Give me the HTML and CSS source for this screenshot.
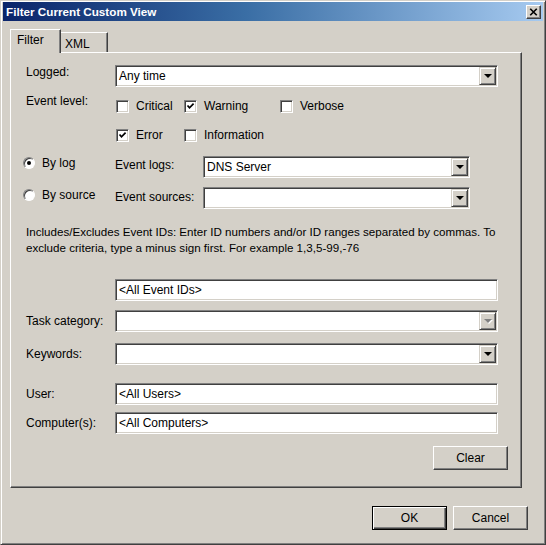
FILE: index.html
```html
<!DOCTYPE html>
<html lang="en">
<head>
  <meta charset="UTF-8">
  <meta name="viewport" content="width=device-width, initial-scale=1.0">
  <title>Filter Current Custom View</title>
  <link rel="stylesheet" href="styles.css">
</head>
<body>
  <div class="window">
    <div class="titlebar">
      <span class="title">Filter Current Custom View</span>
      <button class="close-btn">
        <svg width="14" height="12" viewBox="0 0 14 12"><path d="M3.5 2.5 L10.5 9.5 M10.5 2.5 L3.5 9.5" stroke="#000" stroke-width="1.8" fill="none"/></svg>
      </button>
    </div>

    <div class="content">
      <div class="tabs">
        <div class="tab active">Filter</div>
        <div class="tab">XML</div>
      </div>

      <div class="panel">
        <div class="row row-logged">
          <span class="label">Logged:</span>
          <div class="field wide"><span class="value">Any time</span><span class="drop"></span></div>
        </div>

        <div class="row row-level">
          <span class="label">Event level:</span>
          <div class="checks">
            <label class="check"><span class="box"></span>Critical</label>
            <label class="check"><span class="box checked"><svg width="11" height="11" viewBox="0 0 11 11"><path d="M2.5 4.5 L4.5 6.8 L8.6 2.6" stroke="#000" stroke-width="1.7" fill="none"/></svg></span>Warning</label>
            <label class="check"><span class="box"></span>Verbose</label>
            <label class="check"><span class="box checked"><svg width="11" height="11" viewBox="0 0 11 11"><path d="M2.5 4.5 L4.5 6.8 L8.6 2.6" stroke="#000" stroke-width="1.7" fill="none"/></svg></span>Error</label>
            <label class="check"><span class="box"></span>Information</label>
          </div>
        </div>

        <div class="row row-log">
          <label class="radio-label"><span class="radio on"></span>By log</label>
          <span class="sub-label">Event logs:</span>
          <div class="field narrow"><span class="value">DNS Server</span><span class="drop"></span></div>
        </div>

        <div class="row row-source">
          <label class="radio-label"><span class="radio"></span>By source</label>
          <span class="sub-label">Event sources:</span>
          <div class="field narrow"><span class="value"></span><span class="drop"></span></div>
        </div>

        <p class="hint">Includes/Excludes Event IDs: Enter ID numbers and/or ID ranges separated by commas. To<br>exclude criteria, type a minus sign first. For example 1,3,5-99,-76</p>

        <div class="row row-ids">
          <div class="field wide"><span class="value">&lt;All Event IDs&gt;</span></div>
        </div>

        <div class="row row-task">
          <span class="label">Task category:</span>
          <div class="field wide"><span class="value"></span><span class="drop disabled"></span></div>
        </div>

        <div class="row row-keywords">
          <span class="label">Keywords:</span>
          <div class="field wide"><span class="value"></span><span class="drop"></span></div>
        </div>

        <div class="row row-user">
          <span class="label">User:</span>
          <div class="field wide"><span class="value">&lt;All Users&gt;</span></div>
        </div>

        <div class="row row-computer">
          <span class="label">Computer(s):</span>
          <div class="field wide"><span class="value">&lt;All Computers&gt;</span></div>
        </div>

        <button class="btn clear-btn">Clear</button>
      </div>

      <div class="footer">
        <button class="btn default">OK</button>
        <button class="btn">Cancel</button>
      </div>
    </div>
  </div>
</body>
</html>
```

FILE: styles.css
```css
* {
  box-sizing: border-box;
}

body {
  margin: 0;
  font-family: "Liberation Sans", Arial, sans-serif;
  font-size: 12px;
  color: #000;
  background-color: #d4d0c8;
}

.window {
  width: 546px;
  height: 545px;
  padding: 1px 2px;
  background-color: #d4d0c8;
  border: 1px solid;
  border-color: #d4d0c8 #404040 #404040 #d4d0c8;
  box-shadow: inset 1px 1px #fff, inset -1px -1px #808080;
}

.titlebar {
  height: 19px;
  display: flex;
  align-items: center;
  justify-content: space-between;
  padding: 0 2px 0 3px;
  background: linear-gradient(to right, #0a246a, #3a6ea5 45%, #a6caf0);
}

.title {
  color: #fff;
  font-weight: bold;
  font-size: 11.7px;
}

.close-btn {
  width: 15px;
  height: 14px;
  padding: 0;
  display: flex;
  align-items: center;
  justify-content: center;
  background-color: #d4d0c8;
  border: 1px solid;
  border-color: #fff #404040 #404040 #fff;
  box-shadow: inset -1px -1px #808080;
}

.content {
  padding-left: 7px;
}

.tabs {
  display: flex;
  align-items: flex-end;
  margin-top: 7px;
  height: 24px;
}

.tab {
  height: 20px;
  padding: 3px 0 0 4px;
  width: 47px;
  line-height: 16px;
  background-color: #d4d0c8;
  border-top: 1px solid #fff;
  border-right: 1px solid #404040;
  box-shadow: inset -1px 0 #808080;
}

.tab.active {
  position: relative;
  z-index: 1;
  height: 24px;
  width: 51px;
  margin-bottom: -1px;
  padding: 2px 0 0 6px;
  border-left: 1px solid #fff;
}

.panel {
  width: 512px;
  display: flex;
  flex-direction: column;
  padding: 12px 23px 17px 15px;
  background-color: #d4d0c8;
  border: 1px solid;
  border-color: #fff #404040 #404040 #fff;
  box-shadow: inset -1px -1px #808080;
}

.row {
  display: flex;
  align-items: center;
}

.label {
  width: 89px;
  line-height: 16px;
  flex-shrink: 0;
}

.row-logged {
  align-items: flex-start;
}

.row-logged .label {
  margin-top: -1px;
}

.field {
  height: 22px;
  display: flex;
  align-items: center;
  padding: 0 1px 0 3px;
  background-color: #fff;
  border: 1px solid;
  border-color: #808080 #fff #fff #808080;
  box-shadow: inset 1px 1px #404040, inset -1px -1px #d4d0c8;
}

.field.wide {
  width: 383px;
}

.field.narrow {
  width: 267px;
}

.value {
  flex: 1;
  white-space: nowrap;
}

.drop {
  width: 17px;
  height: 18px;
  display: flex;
  align-items: center;
  justify-content: center;
  background-color: #d4d0c8;
  border: 1px solid;
  border-color: #d4d0c8 #404040 #404040 #d4d0c8;
  box-shadow: inset 1px 1px #fff, inset -1px -1px #808080;
}

.drop::after {
  content: '';
  border-left: 4px solid transparent;
  border-right: 4px solid transparent;
  border-top: 4px solid #000;
}

.drop.disabled::after {
  border-top-color: #808080;
  filter: drop-shadow(1px 1px 0 #fff);
}

.row-level {
  align-items: flex-start;
  margin-top: 9px;
}

.row-level .label {
  margin-top: -3px;
}

.checks {
  display: grid;
  grid-template-columns: 68px 96px auto;
  row-gap: 9px;
  margin-left: 1px;
}

.check {
  height: 20px;
  display: flex;
  align-items: center;
  gap: 7px;
  white-space: nowrap;
}

.box {
  width: 13px;
  height: 13px;
  flex-shrink: 0;
  background-color: #fff;
  border: 1px solid;
  border-color: #808080 #fff #fff #808080;
  box-shadow: inset 1px 1px #404040, inset -1px -1px #d4d0c8;
}

.box svg {
  display: block;
}

.row-log {
  margin-top: 11px;
  align-items: flex-start;
}

.row-source {
  margin-top: 9px;
  align-items: flex-start;
}

.radio-label {
  width: 92px;
  margin-left: -3px;
  display: flex;
  align-items: center;
  gap: 7px;
  line-height: 16px;
  flex-shrink: 0;
}

.row-log .radio-label {
  margin-top: -1px;
}

.row-source .radio-label {
  margin-top: 0;
}

.radio {
  width: 12px;
  height: 12px;
  position: relative;
  background-color: #fff;
  border: 1px solid;
  border-color: #808080 #fff #fff #808080;
  border-radius: 50%;
  box-shadow: inset 1px 1px #404040;
}

.radio.on::after {
  content: '';
  position: absolute;
  top: 3px;
  left: 3px;
  width: 4px;
  height: 4px;
  border-radius: 50%;
  background-color: #000;
}

.sub-label {
  width: 88px;
  line-height: 16px;
  flex-shrink: 0;
}

.row-log .sub-label {
  margin-top: 1px;
}

.row-source .sub-label {
  margin-top: 2px;
}

.hint {
  margin: 15px 0 0 0;
  font-size: 11.6px;
  line-height: 16px;
  white-space: nowrap;
}

.row-ids {
  margin-top: 23px;
  padding-left: 89px;
}

.row-task {
  margin-top: 9px;
}

.row-keywords {
  margin-top: 11px;
}

.row-user {
  margin-top: 18px;
}

.row-computer {
  margin-top: 7px;
}

.btn {
  width: 75px;
  height: 24px;
  padding: 0;
  font: inherit;
  color: #000;
  background-color: #d4d0c8;
  border: 1px solid;
  border-color: #fff #404040 #404040 #fff;
  box-shadow: inset -1px -1px #808080;
}

.btn.default {
  border-color: #000;
  box-shadow: inset 1px 1px #fff, inset -1px -1px #404040, inset -2px -2px #808080;
}

.clear-btn {
  align-self: flex-end;
  margin-top: 12px;
  margin-right: -10px;
}

.footer {
  display: flex;
  justify-content: flex-end;
  gap: 6px;
  margin-top: 18px;
  padding-right: 15px;
}
```
